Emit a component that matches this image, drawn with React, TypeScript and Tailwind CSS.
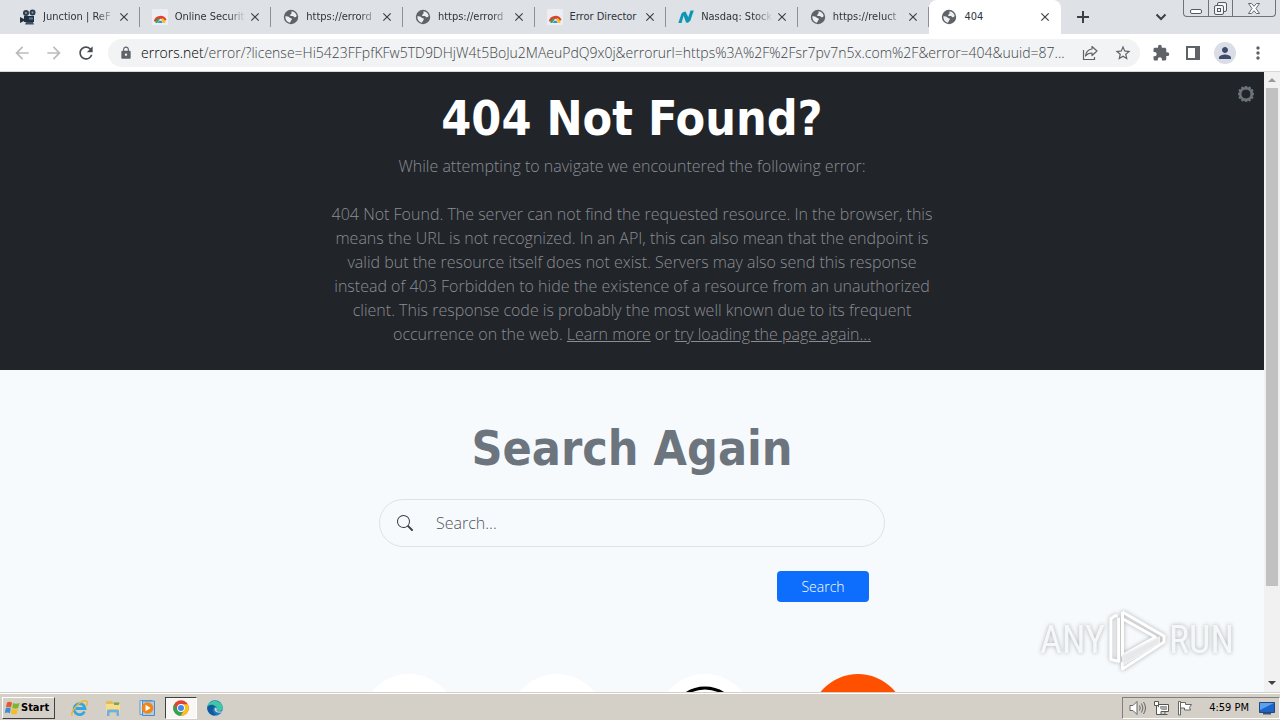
import type { ReactNode } from "react";
import { BsGearWide, BsSearch } from "react-icons/bs";
import {
  MdArrowBack,
  MdArrowForward,
  MdClose,
  MdExtension,
  MdLock,
  MdMoreVert,
  MdPerson,
  MdRefresh,
  MdStarBorder,
} from "react-icons/md";

type IconKind = "camera" | "rainbow" | "globe" | "nasdaq";

interface TabInfo {
  title: string;
  icon: IconKind;
  active?: boolean;
  fits?: boolean;
}

const tabs: TabInfo[] = [
  { title: "Junction | ReF", icon: "camera" },
  { title: "Online Securit", icon: "rainbow" },
  { title: "https://errord", icon: "globe" },
  { title: "https://errord", icon: "globe" },
  { title: "Error Director", icon: "rainbow", fits: true },
  { title: "Nasdaq: Stock", icon: "nasdaq" },
  { title: "https://reluct", icon: "globe" },
  { title: "404", icon: "globe", active: true, fits: true },
];

function Favicon({ kind }: { kind: IconKind }) {
  if (kind === "globe")
    return (
      <svg viewBox="0 0 16 16" className="size-4 shrink-0">
        <circle cx="8" cy="8" r="7.200" fill="#5f6368" />
        <path
          d="M8.500 2.200c2.600.2 4.800 2.200 5.200 4.800-.6.900-1.300 1.400-2.200 1.200-.9-.2-.8-1.200-1.700-1.300-.9-.1-1.300.3-2.200.1-.8-.3-.5-1.300.1-1.700.8-.5 1-.7.800-1.500z"
          fill="#eceef1"
        />
        <path
          d="M2.300 7.300c1.700 0 3.200.3 4.200 1.100.8.700 2.200.5 2.400 1.500.2 1-.9 1.200-1.100 2-.1.700-.6 1.500-1.300 1.800-2.500-.7-4.400-3.200-4.200-6.400z"
          fill="#eceef1"
        />
      </svg>
    );
  if (kind === "camera")
    return (
      <svg viewBox="0 0 16 16" className="size-4 shrink-0">
        <circle cx="6" cy="4" r="3" fill="#2b3d4f" />
        <circle cx="12.5" cy="3.5" r="3" fill="#2b3d4f" />
        <circle cx="6" cy="4" r="1" fill="#8fa3b5" />
        <circle cx="12.5" cy="3.5" r="1" fill="#8fa3b5" />
        <path d="M4 7h10v6H4z" fill="#22313f" />
        <path d="M0 8l4 2v2l-4 2z" fill="#22313f" />
        <path d="M6 13h7l1 2.500H5z" fill="#3d5266" />
        <path d="M9 8.500h4v2H9z" fill="#5f7c96" />
      </svg>
    );
  if (kind === "rainbow")
    return (
      <svg viewBox="0 0 16 16" className="size-4 shrink-0">
        <rect width="16" height="16" rx="1" fill="#eceef1" />
        <path d="M3.200 12.500a5.300 5.300 0 0 1 10-1" fill="none" stroke="#e0402f" strokeWidth="3" />
        <path d="M4.500 14a4 4 0 0 1 2.800-3.800" fill="none" stroke="#2da94f" strokeWidth="2" />
        <path d="M9.500 10.200a4.500 4.500 0 0 1 2.800 3.800" fill="none" stroke="#f8c21c" strokeWidth="2.500" />
        <path d="M6 14a2.300 2.300 0 0 1 4.600 0z" fill="#4285f4" />
      </svg>
    );
  return (
    <svg viewBox="0 0 16 16" className="size-4 shrink-0" fill="#0d97b5">
      <path d="M3.500 4.500L7 2.500 3.500 14H.300z" />
      <path d="M4.500 3.500L7.500 2.500l4 8-1 3H8z" />
      <path d="M12.500 1.500h3.300L12.200 12l-2.700 1.500h-1z" />
    </svg>
  );
}

function Tab({ title, icon, active, fits }: TabInfo) {
  return (
    <div
      className={
        active ? "flex min-w-0 items-center rounded-t-lg bg-white pl-3" : "flex min-w-0 items-center pl-3"
      }
    >
      <Favicon kind={icon} />
      <button
        role="tab"
        aria-selected={!!active}
        className={
          fits
            ? "ml-[7px] h-5 min-w-0 flex-1 text-left whitespace-nowrap text-[#30343a]"
            : "ml-[7px] h-5 min-w-0 flex-1 overflow-hidden mask-r-from-75% text-left whitespace-nowrap text-[#30343a]"
        }
      >
        {title}
      </button>
      <button aria-label="Close tab" className="mr-2 ml-0.5">
        <MdClose className="size-3.5 text-[#3c4043]" />
      </button>
      <span className={active ? "h-5 w-px" : "h-5 w-px bg-[#8d9197]"} />
    </div>
  );
}

function WindowButtons() {
  return (
    <div className="flex h-[17px] w-[93px] self-start rounded-b border border-t-0 border-[#6f747c]">
      <button aria-label="Minimize" className="flex flex-1 items-end justify-center border-r border-[#6f747c] pb-0.5">
        <svg width="12" height="5" fill="#fff" stroke="#555a62">
          <rect x=".5" y=".5" width="11" height="4" rx="1.500" />
        </svg>
      </button>
      <button aria-label="Restore" className="flex flex-1 items-center justify-center border-r border-[#6f747c]">
        <svg width="13" height="13" fill="#f4f5f7" stroke="#555a62">
          <rect x="3.500" y=".5" width="9" height="9" rx="1.500" />
          <rect x=".5" y="3.500" width="9" height="9" rx="1.500" />
          <rect x="3.500" y="6.500" width="3" height="3" />
        </svg>
      </button>
      <button aria-label="Close window" className="flex w-[42px] items-center justify-center">
        <svg width="12" height="11" viewBox="0 0 12 11" fill="#fff" stroke="#555a62" strokeWidth=".9">
          <path d="M.5.500h3L6 3.300 8.500.500h3L8 5.500l3.500 5h-3L6 7.700l-2.500 2.800h-3l3.500-5z" />
        </svg>
      </button>
    </div>
  );
}

function TabStrip() {
  return (
    <div className="flex h-[34px] shrink-0 bg-[#dee1e6] pl-2 font-['DejaVu_Sans_Condensed','DejaVu_Sans',sans-serif] text-[11px] leading-5">
      <div role="tablist" className="grid min-w-0 flex-1 grid-cols-8">
        {tabs.map((tab, i) => (
          <Tab key={i} {...tab} />
        ))}
      </div>
      <div className="flex w-[219px] shrink-0 items-center pr-1">
        <button aria-label="New tab" className="ml-4">
          <svg width="12" height="12" stroke="#3c4043" strokeWidth="2">
            <path d="M6 0v12M0 6h12" />
          </svg>
        </button>
        <button aria-label="Search tabs" className="mr-4 ml-auto">
          <svg width="12" height="8" fill="none" stroke="#3c4043" strokeWidth="2">
            <path d="M1.500 1.500L6 6l4.500-4.500" />
          </svg>
        </button>
        <WindowButtons />
      </div>
    </div>
  );
}

function Toolbar() {
  return (
    <div className="flex h-[38px] shrink-0 items-center border-b border-[#d5d8dc] bg-white pr-3 text-[#5f6368]">
      <div className="flex w-[108px] shrink-0 gap-3 pl-3">
        <button aria-label="Back" className="text-[#babcbe]">
          <MdArrowBack className="size-5" />
        </button>
        <button aria-label="Forward" className="text-[#babcbe]">
          <MdArrowForward className="size-5" />
        </button>
        <button aria-label="Reload" className="text-[#4a4d51]">
          <MdRefresh className="size-5" />
        </button>
      </div>
      <div className="flex h-7 min-w-0 flex-1 items-center rounded-full bg-[#f1f3f4] pr-2 pl-[11px]">
        <MdLock className="size-3.5 shrink-0" />
        <a
          href="#address"
          className="ml-2 min-w-0 flex-1 truncate font-['Open_Sans',sans-serif] text-sm font-light text-[#3f4347]"
        >
          <span className="text-black">errors.net</span>
          /error/?license=Hi5423FFpfKFw5TD9DHjW4t5BoJu2MAeuPdQ9x0j&amp;errorurl=https%3A%2F%2Fsr7pv7n5x.com%2F&amp;error=404&amp;uuid=87...
        </a>
        <button aria-label="Share" className="mr-4 ml-2">
          <svg width="16" height="16" fill="none" stroke="currentColor" strokeWidth="1.200">
            <path d="M1.500 5v9.500h11V12" />
            <path d="M10 1.500l5 4.500-5 4.500V8C7 8 5 9 3.500 11 4 7 6.500 4.500 10 4z" strokeLinejoin="round" />
          </svg>
        </button>
        <button aria-label="Bookmark this page">
          <MdStarBorder className="size-[18px]" />
        </button>
      </div>
      <div className="flex shrink-0 items-center pl-3">
        <button aria-label="Extensions">
          <MdExtension className="size-[18px]" />
        </button>
        <button aria-label="Side panel" className="ml-4">
          <svg width="14" height="14">
            <path d="M1 1h12v12H1z" fill="#fff" stroke="currentColor" strokeWidth="2" />
            <path d="M9 0h5v14H9z" fill="currentColor" />
          </svg>
        </button>
        <button
          aria-label="Profile"
          className="ml-3.5 flex size-[22px] items-center justify-center rounded-full bg-[#dadde5] text-[#3f4a70]"
        >
          <MdPerson className="size-[18px]" />
        </button>
        <button aria-label="Menu" className="ml-3">
          <MdMoreVert className="size-5" />
        </button>
      </div>
    </div>
  );
}

function ErrorBanner() {
  return (
    <section className="relative bg-[#212429] px-4 pt-[17px] pb-6 text-center">
      <button aria-label="Settings" className="absolute top-3.5 right-2.5 text-[#6c757d]">
        <BsGearWide className="size-4" strokeWidth="1" />
      </button>
      <h1 className="mb-[7px] font-['DejaVu_Sans_Condensed','DejaVu_Sans',sans-serif] text-5xl leading-[58px] font-bold text-white">
        404 Not Found?
      </h1>
      <div className="mx-auto max-w-[616px] text-base font-light text-[#8a8e93]">
        <p className="mb-6">While attempting to navigate we encountered the following error:</p>
        <p>
          404 Not Found. The server can not find the requested resource. In the browser, this means the URL is not
          recognized. In an API, this can also mean that the endpoint is valid but the resource itself does not exist.
          Servers may also send this response instead of 403 Forbidden to hide the existence of a resource from an
          unauthorized client. This response code is probably the most well known due to its frequent occurrence on the
          web.{" "}
          <a href="#learn" className="underline">
            Learn more
          </a>{" "}
          or{" "}
          <a href="#reload" className="underline">
            try loading the page again...
          </a>
        </p>
      </div>
    </section>
  );
}

function SearchSection() {
  return (
    <section className="px-4 pt-[49px]">
      <h2 className="mb-[22px] text-center font-['DejaVu_Sans_Condensed','DejaVu_Sans',sans-serif] text-5xl leading-[58px] font-bold text-[#6c757d]">
        Search Again
      </h2>
      <form className="mx-auto flex max-w-[506px] flex-col gap-6" onSubmit={(e) => e.preventDefault()}>
        <div className="flex h-12 items-center rounded-full border border-[#dee2e6] px-[17px]">
          <label htmlFor="query" aria-label="Search the web">
            <BsSearch className="size-4 text-[#3c4147]" />
          </label>
          <input
            id="query"
            type="text"
            placeholder="Search..."
            className="ml-[23px] min-w-0 flex-1 bg-transparent text-base font-light outline-none placeholder:text-[#50565c]"
          />
        </div>
        <button className="mr-4 h-[31px] w-[92px] self-end rounded bg-[#0d6efd] text-sm font-light text-white">
          Search
        </button>
      </form>
      <div className="mx-auto mt-[72px] flex max-w-[550px] gap-[52px] pl-1">
        <a href="#one" aria-label="First search engine" className="size-24 shrink-0 rounded-full bg-white" />
        <a href="#two" aria-label="Second search engine" className="size-24 shrink-0 rounded-full bg-white" />
        <a href="#three" aria-label="Third search engine" className="size-24 shrink-0 rounded-full bg-white">
          <svg viewBox="0 0 96 96" className="size-24">
            <circle cx="48" cy="48" r="34" fill="none" stroke="#000" strokeWidth="3" />
          </svg>
        </a>
        <div className="flex w-[106px] shrink-0 justify-center">
          <a href="#four" aria-label="Fourth search engine" className="size-24 rounded-full bg-[#ff5000]" />
        </div>
      </div>
    </section>
  );
}

function Scrollbar() {
  return (
    <div className="flex w-4 shrink-0 flex-col bg-[#f1f1f1]">
      <button aria-label="Scroll up" className="flex h-4 items-center justify-center">
        <svg width="8" height="4" fill="#9a9a9a">
          <path d="M4 0l4 4H0z" />
        </svg>
      </button>
      <div className="mx-0.5 min-h-0 flex-1">
        <div className="h-[85%] bg-[#c1c1c1]" />
      </div>
      <button aria-label="Scroll down" className="flex h-[18px] items-center justify-center">
        <svg width="8" height="4" fill="#404040">
          <path d="M0 0h8L4 4z" />
        </svg>
      </button>
    </div>
  );
}

function Watermark() {
  return (
    <div className="pointer-events-none absolute right-[46px] bottom-5 flex items-center gap-0.5 font-['Roboto_Condensed',Roboto,sans-serif] text-[38px] text-[#f6f7f8] drop-shadow-[0_0_2px_rgba(0,0,0,0.3)]">
      <span>ANY</span>
      <svg width="60" height="64" viewBox="0 0 62 64" fill="none" stroke="#fff" strokeLinejoin="round">
        <path d="M11 7H8L4 10v42l8 2V9" strokeWidth="3" />
        <path d="M16 3l43 25v6L16 62v-6l33-21M16 3v45l34-19-34-19" strokeWidth="3" />
        <path d="M16 48l38-19v6L17 58z" fill="#e6e8ea" stroke="#eef0f2" strokeWidth="1.500" />
      </svg>
      <span>RUN</span>
    </div>
  );
}

function WindowsFlag() {
  return (
    <svg viewBox="0 0 16 16" className="size-4">
      <path d="M3 2.500c2-1 3.500-.8 5 .2L7 7.500c-1.500-1-3-1.200-5-.3z" fill="#e8562a" />
      <path d="M9 3c2 1 4 1 6.500 0l-1.300 5c-2 .9-4 .9-6-.1z" fill="#7cb82f" />
      <path d="M1.800 8.200c2-.9 3.500-.7 5 .2l-1 4.800c-1.500-1-3-1-5-.2z" fill="#3a8ddb" />
      <path d="M7.800 8.800c2 1 4 1 6.200.1l-1.300 4.900c-2 .9-4 .8-6-.2z" fill="#f5bd22" />
    </svg>
  );
}

function QuickButton({ label, active, children }: { label: string; active?: boolean; children: ReactNode }) {
  return (
    <button
      aria-label={label}
      className={
        active
          ? "flex h-[22px] w-8 items-center justify-center border border-t-[#404040] border-r-white border-b-white border-l-[#404040] bg-[#f8f7f5]"
          : "flex h-[22px] w-8 items-center justify-center"
      }
    >
      <svg viewBox="0 0 18 18" className="size-[18px]">
        {children}
      </svg>
    </button>
  );
}

function Taskbar() {
  return (
    <footer className="flex h-7 shrink-0 items-center border-t border-[#d4d0c8] bg-[#d4d0c8] pl-0.5 font-['DejaVu_Sans_Condensed','DejaVu_Sans',sans-serif] text-[11px] leading-4 text-black shadow-[inset_0_1px_0_#fff]">
      <button className="mt-0.5 flex h-[22px] w-[53px] items-center gap-px border border-t-white border-r-[#404040] border-b-[#404040] border-l-white pl-px font-bold">
        <WindowsFlag />
        Start
      </button>
      <nav aria-label="Quick launch" className="mt-0.5 ml-2 flex gap-0.5">
        <QuickButton label="Internet Explorer">
          <path d="M14.500 12.500a5.500 5.500 0 1 1 .5-3H6" fill="none" stroke="#38a4dc" strokeWidth="2.800" />
          <path d="M2.500 16.500C-1 13 12-1 17 2.500c1 1 .3 3-.7 4.500" fill="none" stroke="#efb92b" strokeWidth="1.400" />
        </QuickButton>
        <QuickButton label="File Explorer">
          <path d="M2 2h6l1 1.500h7V9H2z" fill="#e3bd57" />
          <path d="M2 5h14v9H2z" fill="#f7dd87" />
          <path d="M3 17v-5c0-1 .8-1.500 1.500-1.500h9c.8 0 1.500.5 1.500 1.500v5h-2.500v-3.500h-7V17z" fill="#6fb0de" />
          <path d="M10 3.500h5V6h-5z" fill="#6cab62" />
        </QuickButton>
        <QuickButton label="Media Player">
          <path d="M2 1.500h12v14H2z" fill="#d7e8f5" stroke="#5b9bd0" />
          <path d="M4.500 2h12v14.500h-12z" fill="#a9cdea" stroke="#4c8cc4" />
          <circle cx="9.500" cy="9" r="5.800" fill="#f58410" />
          <path d="M7.500 5.800v6.400l5.200-3.200z" fill="#fff" />
        </QuickButton>
        <QuickButton label="Chrome" active>
          <circle cx="9" cy="9" r="7.800" fill="#e2432f" />
          <path d="M2.200 5.200A7.800 7.800 0 0 0 8.700 16.800L12.300 11 5.500 10.800z" fill="#31a353" />
          <path d="M8.600 16.800A7.800 7.800 0 0 0 15.800 5.200H9l3.400 5.600z" fill="#fbc116" />
          <circle cx="9" cy="9" r="3.900" fill="#fff" />
          <circle cx="9" cy="9" r="3" fill="#4285f4" />
        </QuickButton>
        <QuickButton label="Edge">
          <circle cx="9" cy="9" r="7.800" fill="#1976c9" />
          <path d="M1.300 8C2.500 0 15 0 16.700 8c.3 3-2 4-4.200 4-2 0-1.500-1-1.500-2.500C11 6.500 5 5.500 1.300 8z" fill="#3cc9a5" />
          <path d="M1.300 8c2-3 6-3 8-.5-3 1-3.500 5 .5 8l-2 1C3.500 15.500 1 12 1.300 8z" fill="#125a9e" />
          <path d="M9 8.500c-1.500 2.500.5 6 6 5l1.200-1.500c-2 .8-4 .8-5.200 0-.8-.8 0-1.500 0-2.500z" fill="#d4d0c8" />
        </QuickButton>
      </nav>
      <div className="mt-0.5 ml-auto flex h-[22px] items-center border border-t-[#808080] border-r-white border-b-white border-l-[#808080] pr-1 pl-1.5">
        <svg width="17" height="16" fill="none" stroke="#666" aria-label="Volume">
          <path d="M1 5.500h3l4-4v13l-4-4H1z" fill="#fff" />
          <path d="M10.500 5.500q1.500 2.500 0 5M12.500 3.500q3 4.500 0 9M14.500 2q4 6 0 12" />
        </svg>
        <svg width="16" height="16" className="ml-[7px]" fill="#fff" stroke="#555" aria-label="Network">
          <path d="M5.500 4.500h10v7h-10z" />
          <path d="M7.500 6.500h6v3h-6z" fill="#aaa" stroke="#999" />
          <path d="M1.500 1.500h4v4h-4zM3.500 5.500v9h11M8 14.500v-3h4v3" />
        </svg>
        <svg width="16" height="16" className="ml-2" fill="#fff" stroke="#666" aria-label="Action center">
          <path d="M1.500 15V1.500h2V15zM3.500 2.500h5v2h6l-2 3 1 2.500h-6V8h-4z" />
        </svg>
        <time className="ml-4">4:59 PM</time>
        <button aria-label="Show desktop" className="ml-2.5">
          <svg width="16" height="14">
            <path d="M.5 1.500h15v10H.5z" fill="#1b65c9" stroke="#27477c" />
            <path d="M1 2h14L1 9z" fill="#5ba1ee" />
            <path d="M4 12h8v1.500H4z" fill="#3b536f" />
          </svg>
        </button>
      </div>
    </footer>
  );
}

export default function App() {
  return (
    <div className="flex h-screen flex-col overflow-hidden font-['Open_Sans',sans-serif]">
      <TabStrip />
      <Toolbar />
      <div className="relative flex min-h-0 flex-1">
        <main className="min-w-0 flex-1 overflow-hidden bg-[#f7fafd]">
          <ErrorBanner />
          <SearchSection />
        </main>
        <Scrollbar />
        <Watermark />
      </div>
      <Taskbar />
    </div>
  );
}
